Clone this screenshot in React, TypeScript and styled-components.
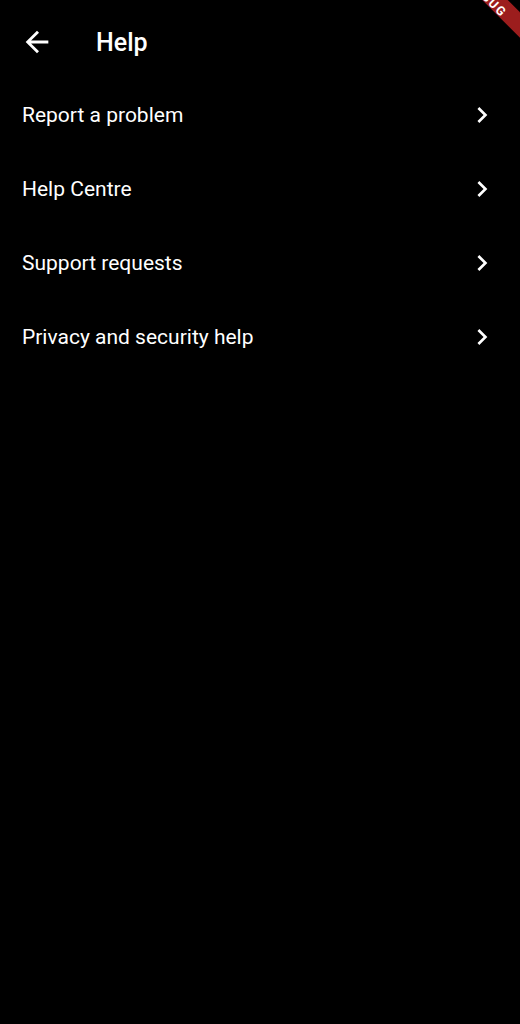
import React from 'react'
import styled, { createGlobalStyle } from 'styled-components'

const GlobalStyle = createGlobalStyle`
  html, body {
    margin: 0;
    padding: 0;
    background: #000;
  }
  body {
    font-family: Roboto, 'Noto Sans', sans-serif;
    color: #fff;
    overflow: hidden;
  }
`

const Screen = styled.div`
  position: relative;
  width: 520px;
  height: 1024px;
  background: #000;
  overflow: hidden;
`

const AppBar = styled.header`
  box-sizing: border-box;
  height: 78px;
  padding: 6px 0 0 20px;
  display: flex;
  align-items: center;
`

const BackBtn = styled.button`
  width: 34px;
  height: 34px;
  padding: 0;
  border: none;
  background: transparent;
  color: #fff;
  display: flex;
  align-items: center;
  justify-content: center;
`

const Title = styled.h1`
  margin: 0 0 0 42px;
  font-size: 25px;
  font-weight: 500;
  line-height: 1;
  color: #fff;
`

const List = styled.div`
  display: flex;
  flex-direction: column;
`

const Row = styled.div`
  box-sizing: border-box;
  height: 74px;
  padding: 0 22px;
  display: flex;
  align-items: center;
  justify-content: space-between;
`

const Label = styled.span`
  font-size: 21px;
  font-weight: 400;
  color: #fff;
`

const Chevron = styled.svg`
  width: 32px;
  height: 32px;
  fill: #fff;
`

// flutter style debug ribbon in the top right corner
const Banner = styled.div`
  position: absolute;
  left: 409px;
  top: -15px;
  width: 160px;
  height: 18px;
  transform: rotate(45deg);
  background: #9c1d1d;
  color: #fff;
  display: flex;
  align-items: center;
  justify-content: center;
`

const BannerText = styled.span`
  font-size: 12.5px;
  font-weight: 700;
  letter-spacing: 1.5px;
  line-height: 1;
  transform: translate(2px, 4px);
`

const items = [
  'Report a problem',
  'Help Centre',
  'Support requests',
  'Privacy and security help',
]

const App = (): JSX.Element => {
  return (
    <Screen>
      <GlobalStyle />
      <AppBar>
        <BackBtn aria-label="Back">
          <svg width="34" height="34" viewBox="0 0 24 24" fill="#fff">
            <path d="M20 11H7.83l5.59-5.59L12 4l-8 8 8 8 1.41-1.41L7.83 13H20v-2z" />
          </svg>
        </BackBtn>
        <Title>Help</Title>
      </AppBar>

      <List>
        {items.map((label) => (
          <Row key={label}>
            <Label>{label}</Label>
            <Chevron viewBox="0 0 24 24">
              <path d="M10 6L8.59 7.41 13.17 12l-4.58 4.59L10 18l6-6z" />
            </Chevron>
          </Row>
        ))}
      </List>

      <Banner>
        <BannerText>DEBUG</BannerText>
      </Banner>
    </Screen>
  )
}

export default App
